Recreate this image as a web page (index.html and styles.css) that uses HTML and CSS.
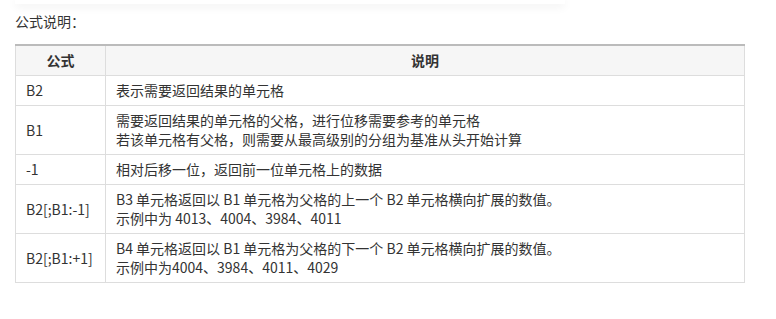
FILE: index.html
```html
<!DOCTYPE html>
<html lang="zh">
<head>
<meta charset="utf-8">
<link rel="stylesheet" href="styles.css">
</head>
<body>
<div class="page">
  <div class="card"></div>
  <p class="caption">公式说明：</p>
  <table class="formula-table">
    <thead>
      <tr><th class="col-formula">公式</th><th>说明</th></tr>
    </thead>
    <tbody>
      <tr><td>B2</td><td>表示需要返回结果的单元格</td></tr>
      <tr><td>B1</td><td>需要返回结果的单元格的父格，进行位移需要参考的单元格<br>若该单元格有父格，则需要从最高级别的分组为基准从头开始计算</td></tr>
      <tr><td>-1</td><td>相对后移一位，返回前一位单元格上的数据</td></tr>
      <tr><td>B2[;B1:-1]</td><td>B3 单元格返回以 B1 单元格为父格的上一个 B2 单元格横向扩展的数值。<br>示例中为 4013、4004、3984、4011</td></tr>
      <tr><td>B2[;B1:+1]</td><td>B4 单元格返回以 B1 单元格为父格的下一个 B2 单元格横向扩展的数值。<br>示例中为4004、3984、4011、4029</td></tr>
    </tbody>
  </table>
</div>
</body>
</html>
```

FILE: styles.css
```css
html, body {
  margin: 0;
  padding: 0;
  background: #fff;
}
body {
  font-family: "Noto Sans CJK SC", "Noto Sans", sans-serif;
  font-size: 14px;
  line-height: 19px;
  color: #333;
}
.page {
  padding: 0 31px 0 15px;
}
.card {
  width: 550px;
  height: 4px;
  background: #fff;
  box-shadow: 0 2px 10px rgba(0, 0, 0, 0.09);
}
.caption {
  margin: 8px 0 13px;
  line-height: 19px;
}
.formula-table {
  width: 730px;
  border-collapse: collapse;
  border-top: 2px solid #bbb;
}
.formula-table th,
.formula-table td {
  border: 1px solid #ddd;
  padding: 5px 10px;
  text-align: left;
  vertical-align: middle;
  font-weight: normal;
}
.formula-table th {
  background: #f6f6f6;
  text-align: center;
  font-weight: bold;
  border-top: none;
}
.formula-table .col-formula {
  width: 69px;
}
```
